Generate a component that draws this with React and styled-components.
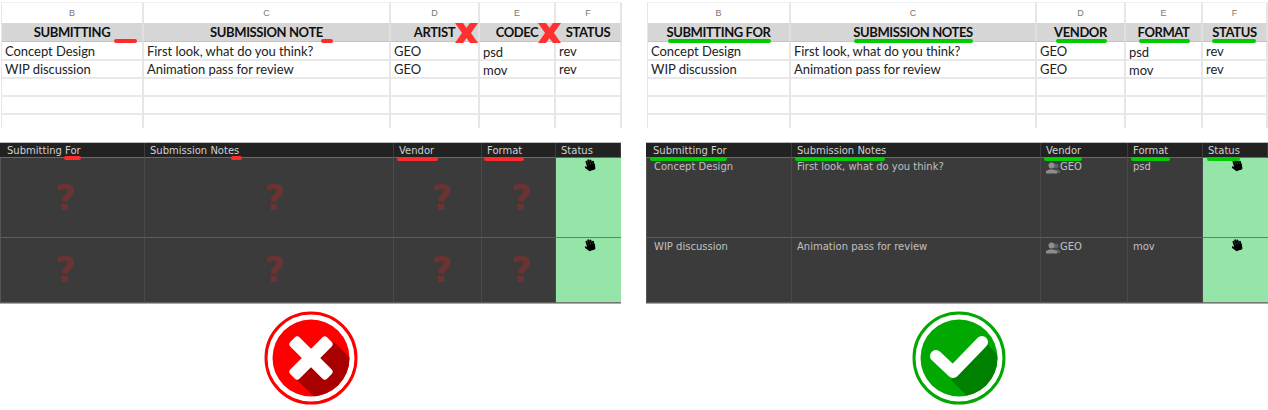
import React from 'react';
import styled, { createGlobalStyle } from 'styled-components';
import { FaHandPaper } from 'react-icons/fa';

const GlobalStyle = createGlobalStyle`
  html, body {
    margin: 0;
    padding: 0;
    background: #fff;
  }
`;

const Page = styled.div`
  display: flex;
  gap: 24px;
  width: 1268px;
  height: 410px;
  overflow: hidden;
`;

const Panel = styled.section`
  position: relative;
  flex: 0 0 622px;
  display: flex;
  flex-direction: column;
  padding-top: 2px;
  box-sizing: border-box;
`;

// Spreadsheet
const Sheet = styled.div`
  display: grid;
  grid-template-columns: ${(p) => p.$columns};
  grid-template-rows: 20px 19px 19px 18px 18px 18px 13px;
  margin-left: 1px;
  border-top: 1px solid #f0f0f0;
  border-left: 1px solid #e6e6e6;
  font-family: Lato, 'Open Sans', sans-serif;
  color: #222;
`;

const SheetCell = styled.div`
  display: flex;
  align-items: center;
  box-sizing: border-box;
  padding: ${(p) => (p.$low ? '2px' : '0')} 0 0 3px;
  font-size: 13px;
  letter-spacing: -0.05px;
  white-space: nowrap;
  border-right: 2px solid #e6e6e6;
  border-bottom: ${(p) => (p.$open ? 'none' : '2px solid #e9e9e9')};
`;

const ColumnLetter = styled(SheetCell)`
  justify-content: center;
  padding: 0;
  font-family: 'Liberation Sans', sans-serif;
  font-size: 9px;
  letter-spacing: 0;
  color: #777;
  border-bottom: none;
`;

const HeaderCell = styled(SheetCell)`
  justify-content: center;
  padding: 0;
  background: #d6d6d6;
  font-weight: 700;
  font-size: 13px;
  letter-spacing: -0.4px;
  color: #111;
  border-right-color: #e0e0e0;
  border-bottom: 1px solid #c4c4c4;
`;

// Review tool table
const Review = styled.div`
  display: grid;
  align-self: flex-start;
  grid-template-columns: ${(p) => p.$columns};
  grid-template-rows: 15px 80px 65px;
  height: 162px;
  box-sizing: border-box;
  margin-top: 14px;
  border-top: 1px solid #bbb;
  border-bottom: 1px solid #aaa;
  background: #3b3b3b;
  font-family: 'DejaVu Sans', sans-serif;
`;

const ReviewHead = styled.div`
  box-sizing: border-box;
  padding: 1px 0 0 ${(p) => (p.$first ? '7px' : '5px')};
  background: #222;
  border-right: 1px solid #3c3c3c;
  border-bottom: 1px solid #6a6a6a;
  font-size: 10px;
  line-height: 14px;
  color: #d0d0d0;
  white-space: nowrap;
`;

const ReviewCell = styled.div`
  display: flex;
  align-items: flex-start;
  box-sizing: border-box;
  padding: 2px 0 0 ${(p) => (p.$first ? '7px' : '5px')};
  border-right: 1px solid #4a4a4a;
  border-bottom: 1px solid #5e5e5e;
  ${(p) => p.$first && 'border-left: 1px solid #555;'}
  font-size: 10px;
  line-height: 13px;
  color: #c0c0c0;
  white-space: nowrap;
`;

const MissingCell = styled(ReviewCell)`
  align-items: center;
  justify-content: center;
  padding: 0 0 0 ${(p) => Math.max(p.$nudge, 0)}px;
  padding-right: ${(p) => Math.max(-p.$nudge, 0)}px;
`;

const Missing = styled.span`
  font-size: 36px;
  font-weight: 700;
  line-height: 36px;
  color: #6d3232;
`;

const StatusCell = styled.div`
  display: flex;
  justify-content: center;
  box-sizing: border-box;
  padding: 1px 0 0 2px;
  background: #95e4a8;
  border-bottom: 1px solid #777;
  color: #000;
`;

const Hand = styled(FaHandPaper)`
  width: 11px;
  height: 12px;
  transform: rotate(-18deg);
`;

const Avatar = styled.svg`
  flex: none;
  width: 14px;
  height: 12px;
  margin-top: 2px;
`;

// Annotations drawn over the tables
const Mark = styled.span`
  position: absolute;
  left: ${(p) => p.$left}px;
  top: ${(p) => p.$top}px;
  width: ${(p) => p.$width}px;
  height: 4px;
  border-radius: 2px;
  background: ${(p) => (p.$good ? '#00cc00' : '#ff2b2b')};
`;

const Cross = styled.svg`
  position: absolute;
  left: ${(p) => p.$left}px;
  top: 23px;
  width: 23px;
  height: 20px;
`;

const BadgeRow = styled.div`
  display: flex;
  justify-content: center;
  padding: 7px 0 0 ${(p) => p.$shift}px;
`;

const BadgeIcon = styled.svg`
  width: 94px;
  height: 94px;
`;

const Badge = ({ good }) => {
  const main = good ? '#00a800' : '#ff0000';
  const dark = good ? '#008000' : '#a80000';
  const clipId = good ? 'clip-good' : 'clip-bad';
  return (
    <BadgeIcon viewBox="0 0 94 94">
      <defs>
        <clipPath id={clipId}>
          <circle cx="47" cy="47" r="38.5" />
        </clipPath>
      </defs>
      <circle cx="47" cy="47" r="45" fill="none" stroke={main} strokeWidth="3" />
      <circle cx="47" cy="47" r="38.5" fill={main} />
      {good ? (
        <>
          <polygon points="39,69 75,33 110,68 74,104" fill={dark} clipPath={`url(#${clipId})`} />
          <path d="M24 45 L41 61 L70 31" fill="none" stroke="#fff" strokeWidth="12" strokeLinecap="round" strokeLinejoin="round" />
        </>
      ) : (
        <>
          <polygon points="33,69 70,31 110,71 73,108" fill={dark} clipPath={`url(#${clipId})`} />
          <g fill="#fff" transform="rotate(45 47 47)">
            <rect x="21" y="40.5" width="52" height="13" rx="3.5" />
            <rect x="40.5" y="21" width="13" height="52" rx="3.5" />
          </g>
        </>
      )}
    </BadgeIcon>
  );
};

const People = () => (
  <Avatar viewBox="0 0 14 12">
    <circle cx="10" cy="4" r="2.6" fill="#5f5f5f" />
    <path d="M7 11 V8.5 Q10 6.5 14 8.5 V11 Z" fill="#5f5f5f" />
    <circle cx="5.5" cy="3.5" r="3" fill="#8e8e8e" />
    <path d="M0 11.5 V9 Q5.5 5.5 11 9 V11.5 Z" fill="#8e8e8e" />
  </Avatar>
);

const letters = ['B', 'C', 'D', 'E', 'F'];

const rows = [
  { title: 'Concept Design', note: 'First look, what do you think?', vendor: 'GEO', format: 'psd', status: 'rev' },
  { title: 'WIP discussion', note: 'Animation pass for review', vendor: 'GEO', format: 'mov', status: 'rev' },
];

const nudges = [-14, 11, 9, 6];

const panels = [
  {
    good: false,
    shift: 0,
    sheetColumns: '142px 247px 89px 76px 66px',
    reviewColumns: '145px 249px 88px 74px 65px',
    sheetHeaders: ['SUBMITTING', 'SUBMISSION NOTE', 'ARTIST', 'CODEC', 'STATUS'],
    reviewHeaders: ['Submitting For', 'Submission Notes', 'Vendor', 'Format', 'Status'],
    marks: [
      { left: 114, top: 39, width: 23 },
      { left: 321, top: 39, width: 12 },
      { left: 64, top: 156, width: 17 },
      { left: 231, top: 156, width: 11 },
      { left: 397, top: 157, width: 41 },
      { left: 484, top: 157, width: 40 },
    ],
    crosses: [455, 538],
  },
  {
    good: true,
    shift: 3,
    sheetColumns: '143px 246px 89px 77px 65px',
    reviewColumns: '146px 249px 87px 75px 65px',
    sheetHeaders: ['SUBMITTING FOR', 'SUBMISSION NOTES', 'VENDOR', 'FORMAT', 'STATUS'],
    reviewHeaders: ['Submitting For', 'Submission Notes', 'Vendor', 'Format', 'Status'],
    marks: [
      { left: 22, top: 39, width: 103 },
      { left: 208, top: 39, width: 119 },
      { left: 410, top: 39, width: 51 },
      { left: 493, top: 39, width: 51 },
      { left: 566, top: 39, width: 44 },
      { left: 4, top: 157, width: 77 },
      { left: 149, top: 157, width: 90 },
      { left: 398, top: 157, width: 38 },
      { left: 485, top: 157, width: 39 },
      { left: 561, top: 157, width: 33 },
    ],
    crosses: [],
  },
];

const App = () => (
  <Page>
    <GlobalStyle />
    {panels.map((panel) => (
      <Panel key={String(panel.good)}>
        <Sheet $columns={panel.sheetColumns}>
          {letters.map((letter) => (
            <ColumnLetter key={letter}>{letter}</ColumnLetter>
          ))}
          {panel.sheetHeaders.map((header) => (
            <HeaderCell key={header}>{header}</HeaderCell>
          ))}
          {rows.map((row) => (
            <React.Fragment key={row.title}>
              <SheetCell>{row.title}</SheetCell>
              <SheetCell>{row.note}</SheetCell>
              <SheetCell>{row.vendor}</SheetCell>
              <SheetCell $low>{row.format}</SheetCell>
              <SheetCell>{row.status}</SheetCell>
            </React.Fragment>
          ))}
          {Array.from({ length: 15 }, (_, i) => (
            <SheetCell key={i} $open={i >= 10} />
          ))}
        </Sheet>

        <Review $columns={panel.reviewColumns}>
          {panel.reviewHeaders.map((header, i) => (
            <ReviewHead key={header} $first={i === 0}>{header}</ReviewHead>
          ))}
          {rows.map((row) => (
            <React.Fragment key={row.title}>
              {panel.good ? (
                <>
                  <ReviewCell $first>{row.title}</ReviewCell>
                  <ReviewCell>{row.note}</ReviewCell>
                  <ReviewCell><People />{row.vendor}</ReviewCell>
                  <ReviewCell>{row.format}</ReviewCell>
                </>
              ) : (
                nudges.map((nudge, i) => (
                  <MissingCell key={nudge} $nudge={nudge} $first={i === 0}>
                    <Missing>?</Missing>
                  </MissingCell>
                ))
              )}
              <StatusCell><Hand /></StatusCell>
            </React.Fragment>
          ))}
        </Review>

        <BadgeRow $shift={panel.shift}>
          <Badge good={panel.good} />
        </BadgeRow>

        {panel.marks.map((mark) => (
          <Mark key={`${mark.left}-${mark.top}`} $left={mark.left} $top={mark.top} $width={mark.width} $good={panel.good} />
        ))}
        {panel.crosses.map((left) => (
          <Cross key={left} $left={left} viewBox="0 0 23 20">
            <polygon points="0,0 8,0 11.5,5 15,0 23,0 16,10 23,20 15,20 11.5,15 8,20 0,20 7,10" fill="#ff3030" />
          </Cross>
        ))}
      </Panel>
    ))}
  </Page>
);

export default App;
